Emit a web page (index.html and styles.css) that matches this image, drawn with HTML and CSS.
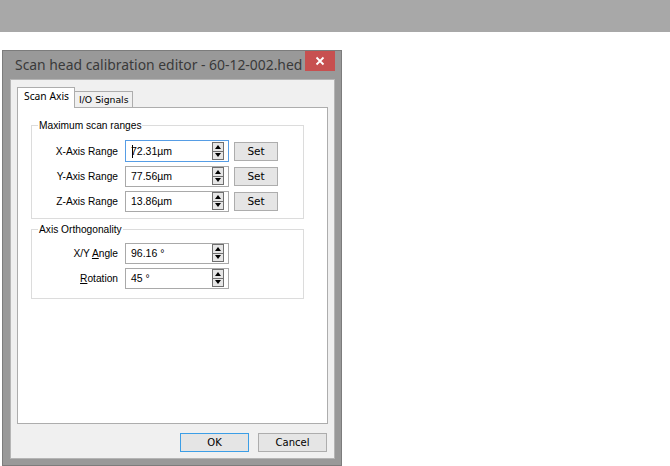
FILE: index.html
```html
<!DOCTYPE html>
<html>
<head>
<meta charset="utf-8">
<link rel="stylesheet" href="styles.css">
</head>
<body>
<div class="topbar"></div>
<div class="stage">
  <div class="window">
    <div class="titlebar">
      <span class="title">Scan head calibration editor - 60-12-002.hed</span>
      <span class="close">
        <svg width="10" height="10" viewBox="0 0 10 10"><path d="M1.5 1.5 L8.5 8.5 M8.5 1.5 L1.5 8.5" stroke="#fff" stroke-width="1.8" fill="none"/></svg>
      </span>
    </div>
    <div class="client">
      <div class="tabs">
        <div class="tab active">Scan Axis</div>
        <div class="tab">I/O Signals</div>
      </div>
      <div class="panel">
        <div class="group g1">
          <div class="legend">Maximum scan ranges</div>
          <div class="rows">
            <div class="row">
              <span class="lbl">X-Axis Range</span>
              <div class="box focus"><span class="caret"></span><span class="val">72.31µm</span><span class="spin"><i class="up"></i><i class="dn"></i></span></div>
              <button class="set">Set</button>
            </div>
            <div class="row">
              <span class="lbl">Y-Axis Range</span>
              <div class="box"><span class="val">77.56µm</span><span class="spin"><i class="up"></i><i class="dn"></i></span></div>
              <button class="set">Set</button>
            </div>
            <div class="row">
              <span class="lbl">Z-Axis Range</span>
              <div class="box"><span class="val">13.86µm</span><span class="spin"><i class="up"></i><i class="dn"></i></span></div>
              <button class="set">Set</button>
            </div>
          </div>
        </div>
        <div class="group g2">
          <div class="legend">Axis Orthogonality</div>
          <div class="rows">
            <div class="row">
              <span class="lbl">X/Y <u>A</u>ngle</span>
              <div class="box"><span class="val">96.16 °</span><span class="spin"><i class="up"></i><i class="dn"></i></span></div>
            </div>
            <div class="row">
              <span class="lbl"><u>R</u>otation</span>
              <div class="box"><span class="val">45 °</span><span class="spin"><i class="up"></i><i class="dn"></i></span></div>
            </div>
          </div>
        </div>
      </div>
      <div class="buttons">
        <button class="btn default">OK</button>
        <button class="btn">Cancel</button>
      </div>
    </div>
  </div>
</div>
</body>
</html>
```

FILE: styles.css
```css
* { box-sizing: border-box; }
html, body { margin: 0; padding: 0; background: #fff; overflow: hidden; }
body { width: 670px; height: 466px; font-family: "Liberation Sans", Arial, sans-serif; font-size: 10.2px; color: #000; }

.topbar { height: 32px; background: #a8a8a8; }
.stage { padding: 18px 0 0 2px; }

.window {
  width: 340px;
  height: 416px;
  background: #999999;
  border: 1px solid #7c7c7c;
  display: flex;
  flex-direction: column;
  padding: 0 6px 6px 7px;
}
.titlebar {
  height: 28px;
  display: flex;
  align-items: flex-start;
  justify-content: space-between;
  flex-shrink: 0;
}
.title {
  font-family: "Noto Sans", "Open Sans", sans-serif;
  font-size: 13.9px;
  color: #3a3a3a;
  margin: 4px 0 0 5px;
  white-space: nowrap;
}
.close {
  flex-shrink: 0;
  width: 30px;
  height: 20px;
  margin-right: 0;
  background: #c75050;
  display: flex;
  align-items: center;
  justify-content: center;
}
.client {
  flex: 1;
  background: #f0f0f0;
  border: 1px solid #b5b5b5;
  padding: 7px 7px 0 6px;
  display: flex;
  flex-direction: column;
}

.tabs { display: flex; align-items: flex-end; height: 20px; position: relative; z-index: 1; }
.tab {
  width: 59px;
  height: 16px;
  padding: 0 0 0 4px;
  border: 1px solid #adadad;
  border-bottom: none;
  background: #f0f0f0;
  font-family: "DejaVu Sans", sans-serif;
  font-size: 9.3px;
  line-height: 16px;
  color: #000;
  margin-left: -1px;
  white-space: nowrap;
}
.tab.active {
  width: 58px;
  margin-left: 0;
  background: #fff;
  padding: 0 0 0 6px;
  line-height: 17px;
  font-family: "Noto Sans", sans-serif;
  font-size: 10.3px;
  margin-bottom: -1px;
  height: 21px;
}
.panel {
  width: 311px;
  height: 317px;
  background: #fff;
  border: 1px solid #adadad;
  padding: 17px 0 0 13px;
}

.group {
  width: 273px;
  border: 1px solid #dcdcdc;
}
.g1 { height: 94px; }
.g2 { height: 70px; margin-top: 10px; }
.legend {
  width: fit-content;
  margin: -7px 0 0 6px;
  padding: 0 1px;
  background: #fff;
  line-height: 13px;
  color: #000;
}
.rows { display: flex; flex-direction: column; gap: 3px; }
.g1 .rows { margin-top: 8px; }
.g2 .rows { margin-top: 6px; }
.row { display: flex; align-items: center; height: 22px; }
.lbl { width: 86px; text-align: right; white-space: nowrap; }
.lbl u { text-decoration: underline; text-underline-offset: 1px; }
.box {
  margin-left: 7px;
  width: 104px;
  height: 22px;
  border: 1px solid #a9a9a9;
  background: #fff;
  display: flex;
  align-items: center;
  position: relative;
  padding-left: 5px;
}
.g1 .row:nth-child(n+2) .box, .g2 .box { height: 21px; }
.box.focus { border-color: #569de5; }
.caret {
  position: absolute;
  left: 6px;
  top: 4px;
  width: 1px;
  height: 13px;
  background: #000;
}
.val { flex: 1; white-space: nowrap; font-size: 10.5px; }
.spin {
  width: 12px;
  height: 18px;
  margin-right: 4px;
  border: 1px solid #6f6f6f;
  background: #e6e6e6;
  display: flex;
  flex-direction: column;
}
.spin i { flex: 1; display: flex; align-items: center; justify-content: center; }
.spin i.up { border-bottom: 1px solid #6f6f6f; }
.spin i.up::before {
  content: "";
  border-left: 3px solid transparent;
  border-right: 3px solid transparent;
  border-bottom: 4px solid #000;
}
.spin i.dn::before {
  content: "";
  border-left: 3px solid transparent;
  border-right: 3px solid transparent;
  border-top: 4px solid #000;
}
.set {
  margin-left: 5px;
  width: 44px;
  height: 19px;
  border: 1px solid #adadad;
  background: #e5e5e5;
  font-family: "DejaVu Sans", sans-serif;
  font-size: 10.5px;
  color: #000;
  padding: 0;
}

.buttons {
  display: flex;
  justify-content: flex-end;
  gap: 9px;
  padding: 9px 0 0 0;
  width: 310px;
}
.btn {
  width: 69px;
  height: 19px;
  border: 1px solid #adadad;
  background: #e5e5e5;
  font-family: "DejaVu Sans", sans-serif;
  font-size: 10px;
  color: #000;
  padding: 0;
}
.btn.default { border-color: #3c9ee6; }
```
